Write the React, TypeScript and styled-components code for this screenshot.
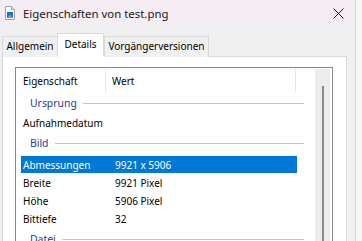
import React from "react";
import styled, { createGlobalStyle } from "styled-components";

const Global = createGlobalStyle`
  html, body { margin: 0; padding: 0; }
  body {
    background: #f6f6f6;
    font-family: "Noto Sans", "Open Sans", sans-serif;
    font-size: 10px;
    color: #000;
  }
`;

const Screen = styled.div`
  display: flex;
  width: 362px;
  height: 241px;
  overflow: hidden;
`;

const Window = styled.div`
  width: 355px;
  flex: none;
  display: flex;
  flex-direction: column;
  background: #f0f0f0;
  border-right: 1px solid #d6d6d6;
`;

const TitleBar = styled.div`
  height: 26px;
  flex: none;
  display: flex;
  align-items: center;
  background: #f4edf3;
  padding-left: 4px;
`;

const TitleText = styled.span`
  margin-left: 7px;
  font-size: 11.4px;
  color: #1a1a1a;
  flex: 1;
  white-space: nowrap;
`;

const CloseBtn = styled.div`
  width: 46px;
  height: 26px;
  display: flex;
  align-items: center;
  justify-content: center;
  margin-right: -6px;
`;

const Body = styled.div`
  flex: 1;
  display: flex;
  flex-direction: column;
  padding: 7px 8px 0 2px;
  min-height: 0;
`;

const TabStrip = styled.div`
  display: flex;
  align-items: flex-end;
  height: 24px;
  margin-bottom: -1px;
  position: relative;
  z-index: 1;
`;

const Tab = styled.div<{ $selected?: boolean; $w: number }>`
  width: ${(p) => p.$w}px;
  height: ${(p) => (p.$selected ? 24 : 21)}px;
  box-sizing: border-box;
  display: flex;
  align-items: center;
  justify-content: center;
  border: 1px solid #d9d9d9;
  border-bottom: ${(p) => (p.$selected ? "1px solid #fff" : "none")};
  margin-left: ${(p) => (p.$selected ? -1 : 0)}px;
  background: ${(p) => (p.$selected ? "#ffffff" : "#f0f0f0")};
  padding-bottom: 2px;
  white-space: nowrap;
`;

const Panel = styled.div`
  flex: 1;
  background: #ffffff;
  border: 1px solid #d9d9d9;
  border-bottom: none;
  padding: 10px 13px 0 12px;
  min-height: 0;
  display: flex;
`;

const ListBox = styled.div`
  flex: 1;
  border: 1px solid #828790;
  border-bottom: none;
  background: #fff;
  display: flex;
  min-height: 0;
  overflow: hidden;
`;

const Content = styled.div`
  flex: 1;
  display: flex;
  flex-direction: column;
`;

const HeaderRow = styled.div`
  height: 24px;
  flex: none;
  display: grid;
  grid-template-columns: 90px 190px;
`;

const HeaderCell = styled.div<{ $pad: number }>`
  display: flex;
  align-items: center;
  padding-left: ${(p) => p.$pad}px;
  border-right: 1px solid #e5e5e5;
  margin: 1px 0 0;
`;

const GroupRow = styled.div<{ $h: number }>`
  height: ${(p) => p.$h}px;
  flex: none;
  display: flex;
  align-items: center;
  padding-left: 14px;
  padding-right: 11px;
  color: #1e3c8f;
  font-size: 10.4px;
`;

const GroupLine = styled.div`
  flex: 1;
  height: 1px;
  background: #bac5da;
  margin-left: 6px;
  margin-top: 1px;
`;

const ItemRow = styled.div<{ $selected?: boolean }>`
  height: 17px;
  margin-top: 1px;
  margin-left: 5px;
  width: 276px;
  flex: none;
  display: grid;
  grid-template-columns: 92px 1fr;
  align-items: center;
  padding-left: 2px;
  box-sizing: border-box;
  background: ${(p) => (p.$selected ? "#0078d7" : "transparent")};
  color: ${(p) => (p.$selected ? "#ffffff" : "#000000")};
  white-space: nowrap;
`;

const Scrollbar = styled.div`
  width: 15px;
  flex: none;
  margin: 1px 2px 0 0;
  background: #ececec;
  display: flex;
  justify-content: center;
  padding-top: 17px;
  box-sizing: border-box;
`;

const Thumb = styled.div`
  width: 2px;
  background: #898989;
  flex: none;
  height: 200px;
`;

const FileIcon = () => (
  <svg width="12" height="14" viewBox="0 0 12 14">
    <path d="M1.5 0.5 H7.5 L10.5 3.5 V13.5 H1.5 Z" fill="#fdfdfd" stroke="#9aa3ad" />
    <path d="M7.5 0.5 V3.5 H10.5" fill="#e6e9ec" stroke="#9aa3ad" />
    <rect x="3" y="6" width="6" height="6" fill="#1f6fc9" />
    <path d="M3 12 L6 8.5 L9 12 Z" fill="#5aa2ea" />
  </svg>
);

const CloseIcon = () => (
  <svg width="11" height="11" viewBox="0 0 11 11">
    <path d="M0.5 0.5 L10.5 10.5 M10.5 0.5 L0.5 10.5" stroke="#1a1a1a" strokeWidth="1" />
  </svg>
);

type Item =
  | { kind: "group"; label: string; h: number }
  | { kind: "item"; name: string; value: string; selected?: boolean };

const rows: Item[] = [
  { kind: "group", label: "Ursprung", h: 21 },
  { kind: "item", name: "Aufnahmedatum", value: "" },
  { kind: "group", label: "Bild", h: 24 },
  { kind: "item", name: "Abmessungen", value: "9921 x 5906", selected: true },
  { kind: "item", name: "Breite", value: "9921 Pixel" },
  { kind: "item", name: "Höhe", value: "5906 Pixel" },
  { kind: "item", name: "Bittiefe", value: "32" },
  { kind: "group", label: "Datei", h: 24 },
];

export default function App() {
  return (
    <>
      <Global />
      <Screen>
        <Window>
          <TitleBar>
            <FileIcon />
            <TitleText>Eigenschaften von test.png</TitleText>
            <CloseBtn>
              <CloseIcon />
            </CloseBtn>
          </TitleBar>
          <Body>
            <TabStrip>
              <Tab $w={56}>Allgemein</Tab>
              <Tab $w={47} $selected>
                Details
              </Tab>
              <Tab $w={105}>Vorgängerversionen</Tab>
            </TabStrip>
            <Panel>
              <ListBox>
                <Content>
                  <HeaderRow>
                    <HeaderCell $pad={7}>Eigenschaft</HeaderCell>
                    <HeaderCell $pad={6}>Wert</HeaderCell>
                  </HeaderRow>
                  {rows.map((r, i) =>
                    r.kind === "group" ? (
                      <GroupRow key={i} $h={r.h}>
                        {r.label}
                        <GroupLine />
                      </GroupRow>
                    ) : (
                      <ItemRow key={i} $selected={r.selected}>
                        <span>{r.name}</span>
                        <span>{r.value}</span>
                      </ItemRow>
                    )
                  )}
                </Content>
                <Scrollbar>
                  <Thumb />
                </Scrollbar>
              </ListBox>
            </Panel>
          </Body>
        </Window>
      </Screen>
    </>
  );
}
